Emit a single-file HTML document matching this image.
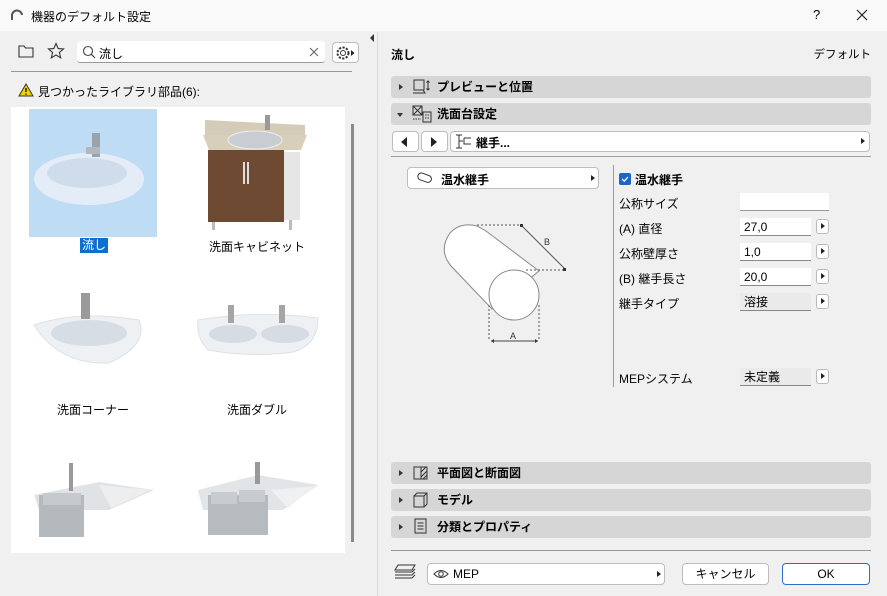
<!DOCTYPE html>
<html><head><meta charset="utf-8"><style>
*{box-sizing:border-box;margin:0;padding:0}
body{width:887px;height:596px;background:#f0f0f0;font-family:"Liberation Sans","Noto Sans CJK JP",sans-serif;font-size:12px;color:#000;position:relative;overflow:hidden}
.a{position:absolute}
.hdr{position:absolute;left:391px;width:480px;height:22px;background:#d6d6d6;border-radius:3px;font-weight:bold;font-size:12px;line-height:22px;padding-left:46px}
.hdr .tri{position:absolute;left:8px;top:8px;width:0;height:0;border-left:4px solid #333;border-top:3px solid transparent;border-bottom:3px solid transparent}
.btn{position:absolute;background:#fff;border:1px solid #bdbdbd;border-radius:4px}
.inp{position:absolute;left:740px;width:71px;height:18px;background:#fff;border-bottom:1px solid #888;line-height:18px;padding-left:4px;font-size:12px}
.sm{position:absolute;left:816px;width:13px;height:15px;background:#fff;border:1px solid #bbb;border-radius:3px}
.sm:after{content:"";position:absolute;left:4px;top:3px;border-left:4px solid #222;border-top:3.5px solid transparent;border-bottom:3.5px solid transparent}
.lbl{position:absolute;left:619px;font-size:12px}
.cap{position:absolute;font-size:12px;text-align:center;width:160px}
</style></head><body>
<div class="a" style="left:0;top:0;width:887px;height:31px;background:#f9f9f9"></div>
<svg class="a" style="left:10px;top:9px" width="14" height="12"><path d="M2 11 V7 A5 5 0 0 1 12 6" stroke="#555" stroke-width="2" fill="none"/></svg>
<div class="a" style="left:31px;top:8px;font-size:12px">機器のデフォルト設定</div>
<div class="a" style="left:813px;top:7px;font-size:13px">?</div>
<svg class="a" style="left:856px;top:9px" width="12" height="12"><path d="M1 1L11 11M11 1L1 11" stroke="#222" stroke-width="1.2"/></svg>

<svg class="a" style="left:18px;top:44px" width="16" height="14"><path d="M1 2H6L7.5 4H15V13H1Z" stroke="#333" fill="none" stroke-width="1.1"/></svg>
<svg class="a" style="left:47px;top:42px" width="18" height="18"><path d="M9 1.5L11.2 6.6 16.5 7 12.4 10.5 13.7 15.8 9 13 4.3 15.8 5.6 10.5 1.5 7 6.8 6.6Z" stroke="#333" fill="none" stroke-width="1.1"/></svg>
<div class="a" style="left:77px;top:41px;width:248px;height:22px;background:#fff;border-bottom:1px solid #999;border-radius:3px"></div>
<svg class="a" style="left:82px;top:45px" width="14" height="14"><circle cx="6" cy="6" r="4.5" stroke="#444" fill="none" stroke-width="1.1"/><path d="M9.3 9.3L13 13" stroke="#444" stroke-width="1.2"/></svg>
<div class="a" style="left:99px;top:45px;font-size:12px">流し</div>
<svg class="a" style="left:309px;top:47px" width="10" height="10"><path d="M1 1L9 9M9 1L1 9" stroke="#666" stroke-width="1.1"/></svg>
<div class="btn" style="left:332px;top:42px;width:27px;height:21px"></div>
<svg class="a" style="left:335px;top:45px" width="22" height="16"><circle cx="8" cy="8" r="2.5" stroke="#333" fill="none"/><circle cx="8" cy="8" r="5.5" stroke="#333" fill="none" stroke-dasharray="2.2 1.4" stroke-width="2"/><path d="M16 5L19.5 8 16 11Z" fill="#222"/></svg>
<div class="a" style="left:11px;top:71px;width:341px;height:1px;background:#999"></div>
<svg class="a" style="left:18px;top:83px" width="16" height="14"><path d="M8 1L15 13H1Z" fill="#f5d000" stroke="#333" stroke-width="1"/><path d="M8 5V9M8 10.5V11.8" stroke="#000" stroke-width="1.3"/></svg>
<div class="a" style="left:38px;top:83px;font-size:12px">見つかったライブラリ部品(6):</div>

<div class="a" style="left:11px;top:107px;width:334px;height:446px;background:#fff"></div>
<div class="a" style="left:29px;top:109px;width:128px;height:128px;background:#bedcf3"></div>
<svg class="a" style="left:29px;top:109px" width="128" height="128"><ellipse cx="60" cy="70" rx="55" ry="26" fill="#e4edf7"/><ellipse cx="58" cy="64" rx="40" ry="15" fill="#cfdcec"/><rect x="63" y="24" width="8" height="24" fill="#9aa2aa"/><rect x="57" y="38" width="14" height="7" fill="#b0b7be"/></svg>
<div class="a" style="left:80px;top:238px;background:#0f6fd1;color:#fff;padding:0 2px;line-height:15px;font-size:12px">流し</div>
<svg class="a" style="left:195px;top:110px" width="130" height="125"><path d="M10 10 L110 15 V25 H10Z" fill="#d4ccb8"/><path d="M8 25 L112 25 L106 40 L14 40Z" fill="#d8cfba"/><ellipse cx="60" cy="30" rx="27" ry="9" fill="#c9ccd0" stroke="#eee"/><rect x="70" y="5" width="5" height="15" fill="#999"/><rect x="13" y="40" width="76" height="72" fill="#6e4a32"/><rect x="89" y="42" width="16" height="68" fill="#e6e6e6"/><rect x="48" y="52" width="2" height="22" fill="#ddd"/><rect x="52" y="52" width="2" height="22" fill="#ddd"/><rect x="17" y="112" width="3" height="8" fill="#bbb"/><rect x="94" y="110" width="3" height="10" fill="#bbb"/></svg>
<div class="cap" style="left:177px;top:238px">洗面キャビネット</div>
<svg class="a" style="left:29px;top:285px" width="130" height="90"><path d="M5 40 Q50 25 110 35 Q120 60 80 78 Q30 80 5 40Z" fill="#eef1f4" stroke="#dde1e5"/><ellipse cx="60" cy="48" rx="38" ry="13" fill="#d7dde4"/><rect x="52" y="8" width="9" height="26" fill="#9a9a9a"/></svg>
<div class="cap" style="left:13px;top:401px">洗面コーナー</div>
<svg class="a" style="left:193px;top:290px" width="130" height="80"><path d="M5 30 Q65 20 125 28 Q125 55 100 62 Q60 68 15 60 Q3 48 5 30Z" fill="#eef1f4" stroke="#dde1e5"/><ellipse cx="40" cy="44" rx="24" ry="9" fill="#d6dce3"/><ellipse cx="92" cy="44" rx="24" ry="9" fill="#d6dce3"/><rect x="35" y="15" width="6" height="18" fill="#a5a5a5"/><rect x="86" y="15" width="6" height="18" fill="#a5a5a5"/></svg>
<div class="cap" style="left:177px;top:401px">洗面ダブル</div>
<svg class="a" style="left:29px;top:460px" width="130" height="90"><path d="M5 35 L70 22 L125 30 L80 50 L10 50Z" fill="#e0e3e6"/><rect x="10" y="35" width="45" height="42" fill="#b4b9be"/><rect x="14" y="33" width="38" height="12" fill="#c6cacf"/><path d="M70 25 L122 30 L82 48Z" fill="#eceef0"/><rect x="40" y="3" width="4" height="28" fill="#999"/></svg>
<svg class="a" style="left:193px;top:460px" width="130" height="85"><path d="M5 30 L65 15 L125 25 L90 50 L10 50Z" fill="#e2e5e8"/><rect x="15" y="35" width="60" height="40" fill="#b6bbc0"/><rect x="18" y="32" width="26" height="12" fill="#c8ccd0"/><rect x="46" y="30" width="26" height="12" fill="#c8ccd0"/><path d="M78 30 L122 26 L95 48Z" fill="#eef0f2"/><rect x="62" y="2" width="5" height="22" fill="#999"/></svg>
<div class="a" style="left:351px;top:124px;width:3px;height:418px;background:#8a8a8a"></div>
<div class="a" style="left:370px;top:34px;border-right:4px solid #333;border-top:4px solid transparent;border-bottom:4px solid transparent"></div>
<div class="a" style="left:377px;top:32px;width:1px;height:564px;background:#dcdcdc"></div>

<div class="a" style="left:391px;top:46px;font-weight:bold;font-size:12px">流し</div>
<div class="a" style="right:16px;top:46px;font-size:11.5px">デフォルト</div>
<div class="hdr" style="top:76px"><span class="tri"></span>プレビューと位置</div>
<svg class="a" style="left:412px;top:78px" width="20" height="18"><rect x="2" y="2" width="10" height="10" stroke="#333" fill="none"/><path d="M1 15H13L11 12" stroke="#333" fill="none"/><path d="M16 3V12M14.5 4.5L16 3 17.5 4.5M14.5 10.5L16 12 17.5 10.5" stroke="#333" fill="none"/></svg>
<div class="hdr" style="top:103px"><span class="tri" style="left:6px;top:10px;border-left:3px solid transparent;border-right:3px solid transparent;border-top:4px solid #333;border-bottom:0"></span>洗面台設定</div>
<svg class="a" style="left:411px;top:104px" width="22" height="20"><rect x="2" y="2" width="9" height="9" stroke="#333" fill="none"/><path d="M2 2L11 11M11 2L2 11" stroke="#333"/><rect x="12" y="8" width="8" height="10" stroke="#333" fill="none"/><path d="M14 11H18M14 14H18M2 15H10" stroke="#333" stroke-dasharray="1.5 1"/></svg>
<div class="btn" style="left:392px;top:131px;width:27px;height:21px"></div>
<div class="a" style="left:401px;top:137px;border-right:6px solid #222;border-top:5px solid transparent;border-bottom:5px solid transparent"></div>
<div class="btn" style="left:421px;top:131px;width:27px;height:21px"></div>
<div class="a" style="left:431px;top:137px;border-left:6px solid #222;border-top:5px solid transparent;border-bottom:5px solid transparent"></div>
<div class="btn" style="left:450px;top:131px;width:420px;height:21px"></div>
<svg class="a" style="left:453px;top:133px" width="22" height="18"><path d="M3 2H9M6 2V15M3 15H9M6 8H10M11 5H18M11 5V11H18" stroke="#333" fill="none"/></svg>
<div class="a" style="left:476px;top:134px;font-weight:bold;font-size:12px">継手...</div>
<div class="a" style="left:861px;top:138px;border-left:4px solid #222;border-top:3.5px solid transparent;border-bottom:3.5px solid transparent"></div>
<div class="a" style="left:391px;top:156px;width:480px;height:1px;background:#a0a0a0"></div>

<div class="btn" style="left:407px;top:167px;width:192px;height:22px"></div>
<svg class="a" style="left:416px;top:172px" width="18" height="12"><rect x="1.5" y="2" width="14" height="7" rx="3.5" transform="rotate(20 8 6)" stroke="#333" fill="none"/></svg>
<div class="a" style="left:441px;top:171px;font-weight:bold;font-size:12px">温水継手</div>
<div class="a" style="left:591px;top:175px;border-left:4px solid #222;border-top:3.5px solid transparent;border-bottom:3.5px solid transparent"></div>
<div class="a" style="left:613px;top:165px;width:1px;height:222px;background:#999"></div>

<svg class="a" style="left:420px;top:200px" width="170" height="150"><path d="M57 26 Q40 22 30 33 Q18 50 31 66 L72 109 L119 71 L66 31Z" fill="#fff" stroke="#888" stroke-width="1"/><circle cx="94" cy="95" r="25" fill="#fff" stroke="#888"/><path d="M57 25H101M106 70H145M69 105V141M119 105V141" stroke="#555" stroke-dasharray="2 2" fill="none"/><path d="M101 25L145 69" stroke="#555"/><path d="M71 141H118" stroke="#444"/><path d="M71 141l3-2v4zM118 141l-3-2v4z" fill="#333"/><rect x="100" y="24" width="3" height="3" fill="#333"/><rect x="143" y="68" width="3" height="3" fill="#333"/><text x="124" y="45" font-size="9" fill="#333" font-family="Liberation Sans">B</text><text x="90" y="139" font-size="9" fill="#333" font-family="Liberation Sans">A</text></svg>

<div class="a" style="left:619px;top:173px;width:12px;height:12px;background:#1b66c4;border-radius:2px"></div>
<svg class="a" style="left:620px;top:174px" width="10" height="10"><path d="M2 5L4.2 7.2 8 3" stroke="#fff" stroke-width="1.3" fill="none"/></svg>
<div class="a" style="left:635px;top:171px;font-weight:bold;font-size:12px">温水継手</div>
<div class="lbl" style="top:195px">公称サイズ</div>
<div class="inp" style="top:193px;width:89px;border-bottom-color:#999"></div>
<div class="lbl" style="top:220px">(A) 直径</div>
<div class="inp" style="top:218px">27,0</div><div class="sm" style="top:219px"></div>
<div class="lbl" style="top:245px">公称壁厚さ</div>
<div class="inp" style="top:243px">1,0</div><div class="sm" style="top:244px"></div>
<div class="lbl" style="top:270px">(B) 継手長さ</div>
<div class="inp" style="top:268px">20,0</div><div class="sm" style="top:269px"></div>
<div class="lbl" style="top:295px">継手タイプ</div>
<div class="inp" style="top:293px;background:#eaeaea">溶接</div><div class="sm" style="top:294px"></div>
<div class="lbl" style="top:370px">MEPシステム</div>
<div class="inp" style="top:368px;background:#eaeaea">未定義</div><div class="sm" style="top:369px"></div>

<div class="hdr" style="top:462px"><span class="tri"></span>平面図と断面図</div>
<svg class="a" style="left:412px;top:464px" width="18" height="18"><rect x="2" y="3" width="13" height="12" stroke="#333" fill="none"/><path d="M9 3V15M9 8L14 3M9 13L15 7M11 15L15 11" stroke="#333"/></svg>
<div class="hdr" style="top:489px"><span class="tri"></span>モデル</div>
<svg class="a" style="left:412px;top:491px" width="18" height="18"><path d="M2 5H12V16H2ZM2 5L5 2H15V13L12 16M12 5L15 2" stroke="#333" fill="none"/></svg>
<div class="hdr" style="top:516px"><span class="tri"></span>分類とプロパティ</div>
<svg class="a" style="left:412px;top:517px" width="18" height="18"><rect x="3" y="2" width="11" height="14" stroke="#333" fill="none"/><path d="M5.5 6H11.5M5.5 9H11.5M5.5 12H11.5" stroke="#333"/></svg>
<div class="a" style="left:391px;top:550px;width:480px;height:1px;background:#999"></div>

<svg class="a" style="left:393px;top:563px" width="24" height="18"><path d="M5 2H22L19 7H2ZM2 9H19L22 6M2 12H19L22 9M2 15H19L22 12" stroke="#333" fill="none"/></svg>
<div class="btn" style="left:427px;top:563px;width:238px;height:22px"></div>
<svg class="a" style="left:433px;top:568px" width="16" height="12"><path d="M1 6Q8 -1 15 6Q8 13 1 6Z" stroke="#333" fill="none"/><circle cx="8" cy="6" r="2.3" stroke="#333" fill="none"/></svg>
<div class="a" style="left:453px;top:567px;font-size:12px">MEP</div>
<div class="a" style="left:657px;top:571px;border-left:4px solid #222;border-top:3.5px solid transparent;border-bottom:3.5px solid transparent"></div>
<div class="btn" style="left:682px;top:563px;width:87px;height:22px;text-align:center;line-height:20px;font-size:12px">キャンセル</div>
<div class="btn" style="left:782px;top:563px;width:88px;height:22px;border-color:#2a6fc9;text-align:center;line-height:20px;font-size:12px">OK</div>
</body></html>
